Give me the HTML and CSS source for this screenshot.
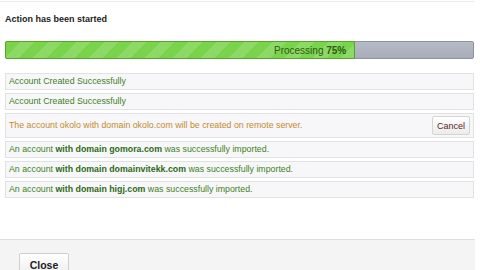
FILE: index.html
```html
<!DOCTYPE html>
<html lang="en">
  <head>
    <meta charset="UTF-8" />
    <title>Action has been started</title>
    <link rel="stylesheet" href="styles.css">
  </head>
  <body>
    <div class="modal">
      <div class="modalBody">
        <h3 class="modalTitle">Action has been started</h3>
        <div class="progress">
          <div class="progressBar" style="width: 75%">
            <span class="progressText">Processing <b>75%</b></span>
          </div>
        </div>
        <ul class="logList">
          <li class="logRow success">Account Created Successfully</li>
          <li class="logRow success">Account Created Successfully</li>
          <li class="logRow warning">
            <span>The account okolo with domain okolo.com will be created on remote server.</span>
            <button class="btnCancel">Cancel</button>
          </li>
          <li class="logRow success">An account <b>with domain gomora.com</b> was successfully imported.</li>
          <li class="logRow success">An account <b>with domain domainvitekk.com</b> was successfully imported.</li>
          <li class="logRow success">An account <b>with domain higj.com</b> was successfully imported.</li>
        </ul>
      </div>
      <div class="modalFooter">
        <button class="btnClose">Close</button>
      </div>
    </div>
  </body>
</html>
```

FILE: styles.css
```css
body {
  margin: 0;
  background: #ffffff;
  font-family: "Liberation Sans", Arial, sans-serif;
  overflow: hidden;
}
.modal {
  width: 475px;
  height: 268px;
  display: flex;
  flex-direction: column;
  border-top: 1px solid #ececec;
  margin-top: 1px;
}
.modalBody {
  flex-shrink: 0;
  height: 237px;
  padding: 0 1px 0 5px;
}
.modalTitle {
  margin: 12px 0 0 0;
  height: 27px;
  font-size: 9px;
  font-weight: bold;
  color: #222;
}
.progress {
  height: 16px;
  border: 1px solid #8d929c;
  border-radius: 2px;
  background: linear-gradient(#b7bbc6, #a7acb9);
}
.progressBar {
  box-sizing: border-box;
  margin: -1px 0 0 -1px;
  border: 1px solid #56a52a;
  border-radius: 2px;
  background-color: #79d44c;
  background-image: linear-gradient(-45deg, rgba(255,255,255,0.14) 25%, transparent 25%, transparent 50%, rgba(255,255,255,0.14) 50%, rgba(255,255,255,0.14) 75%, transparent 75%, transparent);
  background-size: 28px 28px;
  display: flex;
  justify-content: flex-end;
  align-items: center;
  padding-right: 8px;
  height: 18px;
}
.progressText {
  font-size: 10px;
  color: #2f5a17;
}
.logList {
  list-style: none;
  margin: 14px 0 0 0;
  padding: 0;
}
.logRow {
  min-height: 15px;
  margin-bottom: 3px;
  padding: 0 3px;
  border: 1px solid #e2e2e2;
  background: #f7f7f9;
  font-size: 8.8px;
  line-height: 15px;
}
.success {
  color: #3d7f22;
}
.success b {
  color: #2d6a16;
}
.warning {
  display: flex;
  justify-content: space-between;
  align-items: center;
  color: #c58a2a;
  padding: 2px 3px;
}
.btnCancel {
  width: 38px;
  height: 19px;
  padding: 0;
  font-family: "Liberation Sans", Arial, sans-serif;
  font-size: 9px;
  color: #5b2323;
  background: linear-gradient(#ffffff, #ececec);
  border: 1px solid #d4d4d4;
  border-radius: 2px;
}
.modalFooter {
  flex: 1;
  background: #f4f4f4;
  border-top: 1px solid #dedede;
  padding: 13px 0 0 19px;
}
.btnClose {
  width: 50px;
  height: 24px;
  padding: 0;
  font-family: "Liberation Sans", Arial, sans-serif;
  font-size: 10.5px;
  font-weight: bold;
  color: #222;
  background: linear-gradient(#ffffff, #ededed);
  border: 1px solid #cfcfcf;
  border-radius: 2px;
}
```
